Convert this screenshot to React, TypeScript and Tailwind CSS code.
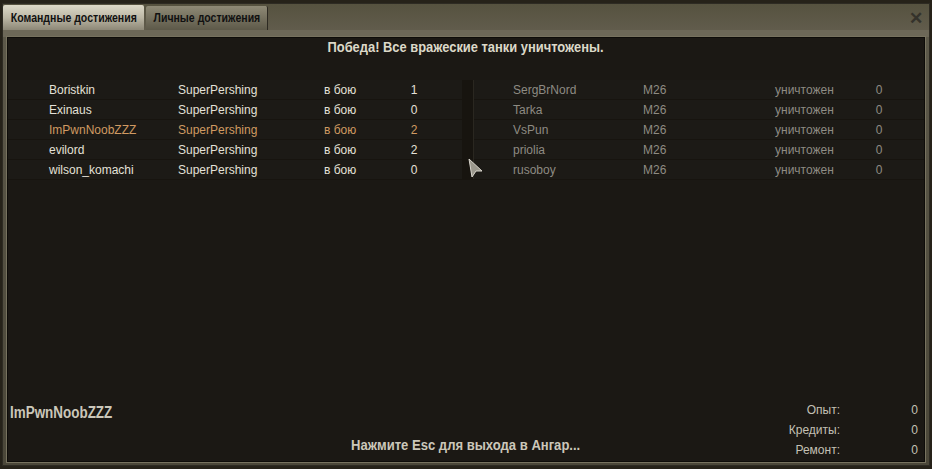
const allies = [
  { name: "Boristkin", tank: "SuperPershing", status: "в бою", frags: "1" },
  { name: "Exinaus", tank: "SuperPershing", status: "в бою", frags: "0" },
  { name: "ImPwnNoobZZZ", tank: "SuperPershing", status: "в бою", frags: "2", me: true },
  { name: "evilord", tank: "SuperPershing", status: "в бою", frags: "2" },
  { name: "wilson_komachi", tank: "SuperPershing", status: "в бою", frags: "0" },
];

const enemies = [
  { name: "SergBrNord", tank: "M26", status: "уничтожен", frags: "0" },
  { name: "Tarka", tank: "M26", status: "уничтожен", frags: "0" },
  { name: "VsPun", tank: "M26", status: "уничтожен", frags: "0" },
  { name: "priolia", tank: "M26", status: "уничтожен", frags: "0" },
  { name: "rusoboy", tank: "M26", status: "уничтожен", frags: "0" },
];

const font = { fontFamily: '"Liberation Sans", Arial, sans-serif' };

function AllyTable() {
  return (
    <div className="w-[454px] flex flex-col gap-px">
      {allies.map((p) => (
        <div
          key={p.name}
          className={
            "h-[19px] flex items-center text-[12px] bg-[#1c1a16] " +
            (p.me ? "text-[#d09a62]" : "text-[#e4e1d8]")
          }
        >
          <span className="w-[170px] pl-[41px]">{p.name}</span>
          <span className="w-[146px]">{p.tank}</span>
          <span className="w-[84px]">{p.status}</span>
          <span className="w-[12px] text-center">{p.frags}</span>
        </div>
      ))}
    </div>
  );
}

function EnemyTable() {
  return (
    <div className="flex-1 flex flex-col gap-px border-l border-[#2a2720]">
      {enemies.map((p) => (
        <div key={p.name} className="h-[19px] flex items-center text-[12px] bg-[#1c1a16] text-[#8e8b83]">
          <span className="w-[169px] pl-[39px]">{p.name}</span>
          <span className="w-[132px]">{p.tank}</span>
          <span className="w-[100px]">{p.status}</span>
          <span className="w-[8px] text-center">{p.frags}</span>
        </div>
      ))}
    </div>
  );
}

export default function App() {
  return (
    <div className="w-[932px] h-[469px] bg-[#262219] pt-[3px] px-[2px] pb-[3px] relative overflow-hidden" style={font}>
      <div className="h-full flex flex-col bg-gradient-to-b from-[#5e5a4b] to-[#4b4739] border border-[#2e2b23]">
        {/* header with tabs */}
        <div className="h-[26px] flex items-end pl-0 gap-[2px] relative bg-gradient-to-b from-[#56523f] to-[#615c4c]">
          <div className="h-[25px] w-[141px] flex items-center justify-center text-[#111] bg-gradient-to-b from-[#ddd9c8] via-[#bdb8a6] to-[#8d8877] rounded-t-[2px] whitespace-nowrap">
            <span className="inline-block text-[13px] font-bold scale-x-[0.81]">Командные достижения</span>
          </div>
          <div className="h-[24px] w-[122px] flex items-center justify-center text-[#111] bg-gradient-to-b from-[#8f8a76] to-[#5d5949] rounded-t-[2px] border-r border-[#2d2a22] whitespace-nowrap">
            <span className="inline-block text-[13px] font-bold scale-x-[0.81]">Личные достижения</span>
          </div>
          <span className="absolute right-[6px] top-[6px] text-[#34322b] text-[17px] font-bold leading-none">
            ✕
          </span>
        </div>
        <div className="h-[7px] bg-[#6d6858]" />
        {/* inner panel */}
        <div className="flex-1 mx-[4px] mb-[3px] border border-[#0e0c09] outline outline-1 outline-[#77725f] bg-[#1b1814] flex flex-col">
          <div className="h-[42px] flex justify-center">
            <span className="inline-block h-fit text-[15px] font-bold text-[#dcd8c8] scale-x-[0.86] whitespace-nowrap leading-[18px]">
              Победа! Все вражеские танки уничтожены.
            </span>
          </div>
          <div className="flex gap-[11px] bg-[#17140f] pb-px">
            <AllyTable />
            <EnemyTable />
          </div>
          <div className="flex-1" />
          <div className="grid grid-cols-[1fr_auto_1fr] items-end px-[2px]">
            <div className="pb-[36px]">
              <span className="inline-block text-[16px] font-bold text-[#cbc7ba] scale-x-[0.84] origin-left leading-[18px]">
                ImPwnNoobZZZ
              </span>
            </div>
            <div className="pb-[4px]">
              <span className="inline-block text-[15px] font-bold text-[#cbc7ba] scale-x-[0.87] whitespace-nowrap leading-[18px]">
                Нажмите Esc для выхода в Ангар...
              </span>
            </div>
            <div className="flex flex-col items-end text-[12px] text-[#c4c0b4] leading-[20px] pr-[4px] pb-px">
              {[
                ["Опыт:", "0"],
                ["Кредиты:", "0"],
                ["Ремонт:", "0"],
              ].map(([k, v]) => (
                <div key={k} className="flex">
                  <span className="w-[60px] text-right">{k}</span>
                  <span className="w-[78px] text-right">{v}</span>
                </div>
              ))}
            </div>
          </div>
        </div>
      </div>
      {/* mouse cursor */}
      <svg className="absolute left-[468px] top-[158px]" width="16" height="20" viewBox="0 0 16 20">
        <path d="M1 1 L14 13 L8 13 L4 19 Z" fill="#9a978c" stroke="#d8d5cc" strokeWidth="1" />
      </svg>
    </div>
  );
}
